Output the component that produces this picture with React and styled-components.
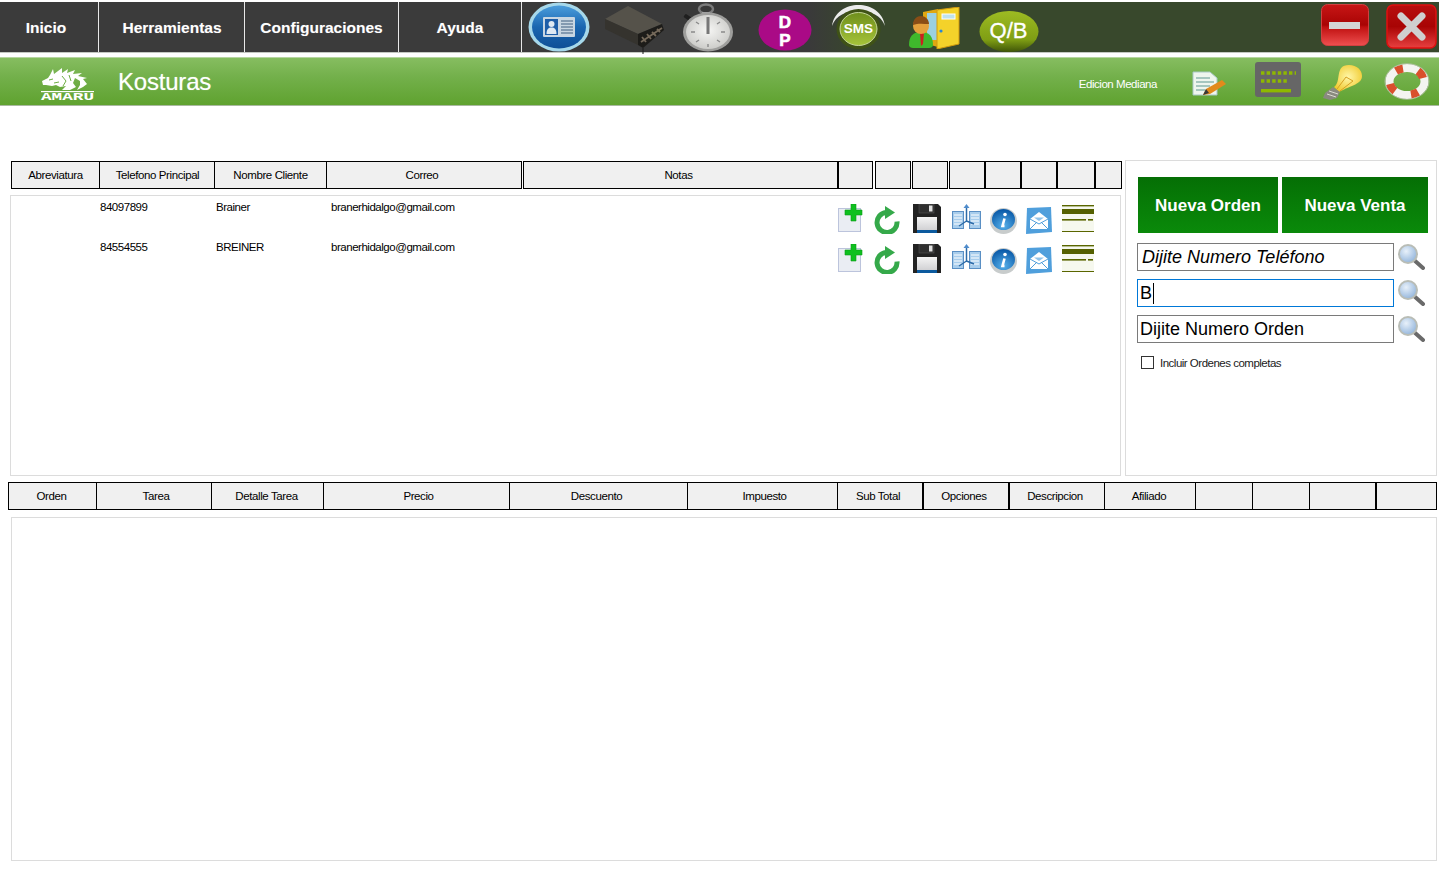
// App.jsx
import React from "react"
import styled, {createGlobalStyle} from "styled-components"

const GlobalStyle = createGlobalStyle`
    html, body {
        margin: 0;
        padding: 0;
        background: #ffffff;
        overflow: hidden;
    }
    body {
        font-family: "Liberation Sans", Arial, sans-serif;
        color: #000000;
    }
`

const Page = styled.div`
    width: 1439px;
    height: 894px;
    display: flex;
    flex-direction: column;
    padding-top: 2px;
    box-sizing: border-box;
`

// Верхня темна панель
const TopBar = styled.div`
    height: 50px;
    display: flex;
    align-items: stretch;
    background: #3a3a3a;
    border-bottom: 1px solid #c4c8c2;
`

const MenuButton = styled.div`
    width: ${({$w}) => $w}px;
    background: #3b3b3b;
    color: #ffffff;
    font-size: 15.5px;
    font-weight: 700;
    display: flex;
    align-items: center;
    justify-content: center;
    padding-top: 1px;
    padding-right: ${({$shift}) => $shift || 0}px;
    box-sizing: border-box;
    text-shadow: 0 0 1px rgba(255, 255, 255, 0.3);
`

const MenuSeparator = styled.div`
    width: 1px;
    margin-right: 1px;
    background: #e8e8e8;
`

const ToolIcons = styled.div`
    display: flex;
    align-items: flex-start;
    flex-grow: 1;
    background: linear-gradient(90deg, #3a3a3a 0%, #3a3a3a 36%, #38482c 42%, #38482c 100%);
`

const ToolSlot = styled.div`
    margin-left: ${({$left}) => $left}px;
    margin-top: ${({$top}) => $top}px;
    display: flex;
    line-height: 0;
`

const WindowButtons = styled.div`
    display: flex;
    align-items: flex-start;
    gap: 17px;
    padding: 2px 2px 0 0;
    background: #38482c;
`

// Зелена панель із заголовком
const TitleBar = styled.div`
    height: 49px;
    margin-top: 4px;
    display: flex;
    align-items: flex-start;
    background: linear-gradient(180deg, #86bd60 0%, #73b04b 40%, #5fa22f 100%);
    border-top: 1px solid #b7d6a1;
    border-bottom: 1px solid #a9b9a0;
    box-sizing: border-box;
`

const LogoBox = styled.div`
    margin: 8px 0 0 40px;
    width: 56px;
    height: 38px;
    line-height: 0;
`

const Title = styled.div`
    margin: 10px 0 0 22px;
    color: #ffffff;
    font-size: 24px;
    line-height: 28px;
    letter-spacing: -0.2px;
    text-shadow: 0 0 1px rgba(255, 255, 255, 0.5);
`

const Edition = styled.div`
    margin: 19px 35px 0 auto;
    color: #ffffff;
    font-size: 11.5px;
    line-height: 14px;
    letter-spacing: -0.45px;
`

const TitleIcons = styled.div`
    display: flex;
    align-items: flex-start;
    margin-right: 8px;
    line-height: 0;
`

const TitleSlot = styled.div`
    margin-left: ${({$left}) => $left}px;
    margin-top: ${({$top}) => $top}px;
    line-height: 0;
`

// Верхня частина: таблиця клієнтів і панель пошуку
const UpperArea = styled.div`
    margin-top: 54px;
    padding-left: 10px;
    display: flex;
    gap: 4px;
`

const LeftColumn = styled.div`
    width: 1111px;
    display: flex;
    flex-direction: column;
`

const HeaderRow = styled.div`
    display: flex;
    height: 28px;
    margin-left: ${({$left}) => $left}px;
    margin-top: ${({$top}) => $top}px;
`

const HeaderCell = styled.div`
    width: ${({$w}) => $w}px;
    margin-left: ${({$gap}) => $gap}px;
    flex-shrink: 0;
    box-sizing: border-box;
    border: 1px solid #000000;
    background: #f0f0f0;
    font-size: 11.5px;
    letter-spacing: -0.4px;
    display: flex;
    align-items: center;
    justify-content: center;
    padding-left: ${({$shift}) => ($shift > 0 ? $shift : 0)}px;
    padding-right: ${({$shift}) => ($shift < 0 ? -$shift : 0)}px;
`

const Panel = styled.div`
    box-sizing: border-box;
    border: 1px solid #dcdcdc;
    background: #ffffff;
`

const ClientList = styled(Panel)`
    height: 281px;
    margin-top: 6px;
`

const ClientRow = styled.div`
    height: 40px;
    display: flex;
    font-size: 11.5px;
    letter-spacing: -0.47px;
`

const ClientCell = styled.div`
    width: ${({$w}) => $w}px;
    flex-shrink: 0;
    padding-top: 4px;
    line-height: 14px;
`

const RowIcons = styled.div`
    display: flex;
    margin-left: ${({$left}) => $left}px;
    padding-top: 8px;
    line-height: 0;
`

const RowIconSlot = styled.div`
    width: ${({$w}) => $w}px;
    padding-top: ${({$top}) => $top}px;
    flex-shrink: 0;
`

const SearchPanel = styled(Panel)`
    width: 312px;
    height: 316px;
    padding: 16px 0 0 11px;
`

const ActionRow = styled.div`
    display: flex;
    gap: 4px;
    margin-left: 1px;
`

const ActionButton = styled.div`
    width: ${({$w}) => $w}px;
    height: 56px;
    box-sizing: border-box;
    padding-top: 2px;
    background: linear-gradient(180deg, #056f05 0%, #0a8a0a 100%);
    color: #ffffff;
    font-size: 17px;
    font-weight: 700;
    display: flex;
    align-items: center;
    justify-content: center;
`

const SearchRows = styled.div`
    margin-top: 10px;
    display: flex;
    flex-direction: column;
    gap: 8px;
`

const SearchRow = styled.div`
    display: flex;
    align-items: center;
    gap: 3px;
`

const SearchField = styled.div`
    width: 257px;
    height: 28px;
    box-sizing: border-box;
    border: 1px solid ${({$active}) => ($active ? "#0078d7" : "#7a7a7a")};
    padding: 1px 0 0 ${({$italic}) => ($italic ? 4 : 2)}px;
    font-size: 18px;
    font-style: ${({$italic}) => ($italic ? "italic" : "normal")};
    display: flex;
    align-items: center;
    white-space: nowrap;
`

const Caret = styled.span`
    width: 1px;
    height: 21px;
    background: #000000;
    margin-left: 1px;
`

const CheckRow = styled.label`
    display: flex;
    align-items: center;
    margin: 13px 0 0 4px;
    font-size: 11.5px;
    letter-spacing: -0.5px;
    color: #1a1a1a;
`

const CheckBox = styled.span`
    width: 13px;
    height: 13px;
    box-sizing: border-box;
    border: 1px solid #333333;
    background: #ffffff;
    margin-right: 6px;
`

const OrderList = styled(Panel)`
    margin: 7px 0 0 11px;
    width: 1426px;
    height: 344px;
`

// Піктограми панелі інструментів
const IdCardIcon = () => (
  <svg width="62" height="50" viewBox="0 0 62 50">
    <defs>
      <linearGradient id="idBlue" x1="0" y1="0" x2="0" y2="1">
        <stop offset="0" stopColor="#4b9ddc" />
        <stop offset="0.5" stopColor="#1a66b0" />
        <stop offset="1" stopColor="#0f4f96" />
      </linearGradient>
    </defs>
    <ellipse cx="31" cy="25" rx="30.5" ry="24.5" fill="#a6d8ea" />
    <ellipse cx="31" cy="25" rx="27" ry="21.5" fill="url(#idBlue)" />
    <rect x="15" y="15" width="32" height="20" rx="1" fill="#c8d6e2" />
    <rect x="17" y="17" width="13" height="16" fill="#1e5ea8" />
    <circle cx="23.5" cy="22" r="3" fill="#dfe9f2" />
    <path d="M18.5 32c0-5 2-6.5 5-6.5s5 1.5 5 6.5z" fill="#dfe9f2" />
    <path d="M33 19h12M33 22h12M33 25h12M33 28h12M33 31h12" stroke="#3f5f80" strokeWidth="1.2" />
  </svg>
)

const DrawerIcon = () => (
  <svg width="62" height="52" viewBox="0 0 62 52">
    <path d="M1 17 L24 4 L58 22 L34 32z" fill="#55524a" />
    <path d="M1 17 L34 32 L34 43 L1 27z" fill="#35332e" />
    <path d="M34 32 L58 22 L60 28 L39 46 L34 43z" fill="#1d1c19" />
    <path d="M38 35 L42 40 M43 32 L47 37 M48 30 L52 34 M53 27 L56 30 M37 40 L58 26" stroke="#75695a" strokeWidth="1.8" />
    <path d="M39 46 L39 52" stroke="#1a1a1a" strokeWidth="1" />
  </svg>
)

const StopwatchIcon = () => (
  <svg width="54" height="50" viewBox="0 0 54 50">
    <defs>
      <radialGradient id="watchFace" cx="0.5" cy="0.45" r="0.6">
        <stop offset="0" stopColor="#f6f6f4" />
        <stop offset="1" stopColor="#c9c9c6" />
      </radialGradient>
    </defs>
    <ellipse cx="24" cy="7" rx="7" ry="4.5" fill="none" stroke="#7c7c7c" strokeWidth="2.5" />
    <rect x="20" y="10" width="8" height="5" fill="#a4a4a4" />
    <rect x="2" y="13" width="7" height="4" rx="1" transform="rotate(35 5 15)" fill="#1f1f1f" />
    <ellipse cx="26" cy="30" rx="25" ry="19.5" fill="#9e9e9c" />
    <ellipse cx="26" cy="30" rx="22" ry="17" fill="url(#watchFace)" />
    <path d="M9 30h4M39 30h4M14 20l3 2M38 20l-3 2M14 40l3-2M38 40l-3-2M26 15v3M26 42v3" stroke="#8a8a8a" strokeWidth="1.4" />
    <rect x="24.5" y="15" width="3" height="17" fill="#777777" />
  </svg>
)

const DpIcon = () => (
  <svg width="54" height="42" viewBox="0 0 54 42">
    <ellipse cx="27" cy="21" rx="26.5" ry="20.5" fill="#aa0a86" />
    <text x="27" y="18.5" textAnchor="middle" fontFamily="Liberation Sans" fontWeight="700" fontSize="17" fill="#ffffff" stroke="#ffffff" strokeWidth="0.6">D</text>
    <text x="27" y="37" textAnchor="middle" fontFamily="Liberation Sans" fontWeight="700" fontSize="17" fill="#ffffff" stroke="#ffffff" strokeWidth="0.6">P</text>
  </svg>
)

const SmsIcon = () => (
  <svg width="55" height="46" viewBox="0 0 55 46">
    <defs>
      <linearGradient id="smsGreen" x1="0" y1="0" x2="0" y2="1">
        <stop offset="0" stopColor="#6f8f1c" />
        <stop offset="1" stopColor="#a6c43a" />
      </linearGradient>
    </defs>
    <path d="M1 22C3 8 15 1 27.5 1S52 8 54 22C50 11 40 7 27.5 7S5 11 1 22z" fill="#ececec" />
    <ellipse cx="27.5" cy="25" rx="22" ry="20" fill="#3f5216" />
    <ellipse cx="27.5" cy="25" rx="18.5" ry="16.5" fill="url(#smsGreen)" stroke="#c6d79a" strokeWidth="1" />
    <text x="27.5" y="28.5" textAnchor="middle" fontFamily="Liberation Sans" fontWeight="700" fontSize="13.5" fill="#ffffff">SMS</text>
  </svg>
)

const DoorUserIcon = () => (
  <svg width="52" height="42" viewBox="0 0 52 42">
    <path d="M15 5 L30 2 V40 L15 36z" fill="#e0a712" />
    <rect x="19" y="6" width="10" height="27" fill="#9bd0e2" />
    <path d="M29 3 L51 0 V37 L29 42z" fill="#f4d22a" stroke="#d19a0e" strokeWidth="1" />
    <rect x="34" y="7" width="13" height="5" fill="#bfe2ee" stroke="#ffffff" strokeWidth="1" />
    <circle cx="33" cy="24" r="1.6" fill="#2b86d6" />
    <path d="M1 38c0-9 4-13 12-13s12 4 12 13c0 2-2 3-4 3H5c-2 0-4-1-4-3z" fill="#3fb92c" />
    <path d="M12 26l4 0-1 11-2 2z" fill="#cc2020" />
    <circle cx="13" cy="19" r="8" fill="#e4a03c" />
    <path d="M5 18c0-6 4-9 8-9s8 3 8 8c-5 0-11-1-16 1z" fill="#8a4d16" />
  </svg>
)

const QbIcon = () => (
  <svg width="60" height="41" viewBox="0 0 60 41">
    <defs>
      <linearGradient id="qbGreen" x1="0" y1="0" x2="0" y2="1">
        <stop offset="0" stopColor="#9dbb22" />
        <stop offset="0.7" stopColor="#7f9e14" />
        <stop offset="1" stopColor="#3f5508" />
      </linearGradient>
    </defs>
    <ellipse cx="30" cy="20.5" rx="29.5" ry="20.5" fill="url(#qbGreen)" />
    <text x="29.5" y="26.5" textAnchor="middle" fontFamily="Liberation Sans" fontSize="22" fill="#ffffff" stroke="#ffffff" strokeWidth="0.3">Q/B</text>
  </svg>
)

const MinimizeIcon = () => (
  <svg width="48" height="42" viewBox="0 0 48 42">
    <defs>
      <linearGradient id="redMin" x1="0" y1="0" x2="0" y2="1">
        <stop offset="0" stopColor="#c81616" />
        <stop offset="0.5" stopColor="#a80404" />
        <stop offset="0.55" stopColor="#c01010" />
        <stop offset="1" stopColor="#ee5050" />
      </linearGradient>
    </defs>
    <rect x="0.5" y="0.5" width="47" height="41" rx="6" fill="url(#redMin)" stroke="#d04040" />
    <rect x="8" y="18" width="31" height="7" fill="#d4d4d4" />
  </svg>
)

const CloseIcon = () => (
  <svg width="51" height="45" viewBox="0 0 51 45">
    <defs>
      <linearGradient id="redClose" x1="0" y1="0" x2="0" y2="1">
        <stop offset="0" stopColor="#b80f0f" />
        <stop offset="0.5" stopColor="#a80404" />
        <stop offset="1" stopColor="#e84040" />
      </linearGradient>
    </defs>
    <rect x="1" y="1" width="49" height="43" rx="6" fill="url(#redClose)" stroke="#e01010" strokeWidth="1.5" />
    <path d="M15 12 L36 33 M36 12 L15 33" stroke="#cfcfcf" strokeWidth="7" strokeLinecap="round" />
  </svg>
)

// Логотип: дракон і підпис
const DragonLogo = () => (
  <svg width="56" height="38" viewBox="0 0 56 38">
    <path
      fill="#ffffff"
      d="M2 15 L8 12 L10 9 L13 3 L14 8 L18 5 L22 2 L22 7 L28 3 L27 7 L35 4 L33 8 L42 7 L38 10 L47 12 L43 13 L47 18 L43 21 L37 24 L40 19 L40 15 L35 12 L33 17 L36 21 L30 24 L22 24 L26 20 L20 21 L16 19 L12 20 L6 19 L3 19 Z"
    />
    <path d="M9 14l4-1M22 10l4 5-3 5M29 9l2 6M14 17l5-1" stroke="#6fae45" strokeWidth="1" fill="none" />
    <rect x="1" y="25" width="53" height="1.2" fill="#ffffff" />
    <text x="1" y="34" textLength="53" lengthAdjust="spacingAndGlyphs" fontFamily="Liberation Mono" fontWeight="700" fontSize="10.5" fill="#ffffff">AMARU</text>
  </svg>
)

const EditNoteIcon = () => (
  <svg width="36" height="26" viewBox="0 0 36 26">
    <path d="M1 1h17l7 6v17H1z" fill="#eef5ee" stroke="#a9c7c7" strokeWidth="1" />
    <path d="M4 7h14M4 11h18M4 15h14M4 19h9" stroke="#8eb6b0" strokeWidth="1.6" />
    <path d="M11 24 L14 18 L30 9 L34 13 L18 23z" fill="#e28a1c" />
    <path d="M11 24 L14 18 L17 22z" fill="#383838" />
  </svg>
)

const KeyboardIcon = () => (
  <svg width="46" height="35" viewBox="0 0 46 35">
    <rect width="46" height="35" rx="3" fill="#666666" />
    <path d="M6 11h35M6 19h28" stroke="#8fb800" strokeWidth="3.6" strokeDasharray="3.4 2.2" />
    <rect x="6" y="27" width="30" height="3.4" fill="#8fb800" />
  </svg>
)

const BulbIcon = () => (
  <svg width="40" height="36" viewBox="0 0 40 36">
    <defs>
      <radialGradient id="bulbGlow" cx="0.5" cy="0.45" r="0.6">
        <stop offset="0" stopColor="#fff7a8" />
        <stop offset="1" stopColor="#f0c92c" />
      </radialGradient>
    </defs>
    <path d="M27 1C35 1 40 6 40 12C40 20 30 21 17 28L12 23C20 18 12 1 27 1z" fill="url(#bulbGlow)" />
    <path d="M15 25L24 13L31 17L18 27" stroke="#d6a125" strokeWidth="1" fill="none" />
    <path d="M11 23l7 5-3 6-7 2-7-2 2-5z" fill="#8a8a80" />
    <path d="M5 30l9 3M7 27l9 3" stroke="#dcdcd0" strokeWidth="1" />
  </svg>
)

const LifebuoyIcon = () => (
  <svg width="48" height="37" viewBox="0 0 48 37">
    <ellipse cx="24" cy="18.5" rx="17.5" ry="13.5" fill="none" stroke="#f4f4f0" strokeWidth="8" />
    <path
      d="M13 8 A17.5 13.5 0 0 1 20 5.5 M35 8 A17.5 13.5 0 0 1 40 15 M35 29 A17.5 13.5 0 0 1 28 31.5 M12 28 A17.5 13.5 0 0 1 7 21"
      fill="none"
      stroke="#d9502c"
      strokeWidth="8"
    />
    <ellipse cx="24" cy="18.5" rx="22" ry="17.8" fill="none" stroke="#b9c2ae" strokeWidth="0.8" />
  </svg>
)

// Піктограми рядка клієнта
const AddDocIcon = () => (
  <svg width="25" height="28" viewBox="0 0 25 28">
    <rect x="0.5" y="4.5" width="22" height="23" fill="#eaedf3" stroke="#bcc4dc" />
    <path d="M13 0h5v6h6v5h-6v6h-5v-6H7V6h6z" fill="#0fc01f" stroke="#0a9a18" strokeWidth="0.6" />
  </svg>
)

const RefreshIcon = () => (
  <svg width="27" height="28" viewBox="0 0 27 28">
    <path d="M23 15.5A10 10 0 1 1 12 6.5" fill="none" stroke="#35a94a" strokeWidth="5" />
    <path d="M11 0 L21 6.5 L11 13z" fill="#35a94a" />
  </svg>
)

const FloppyIcon = () => (
  <svg width="28" height="29" viewBox="0 0 28 29">
    <defs>
      <linearGradient id="floppyLabel" x1="0" y1="0" x2="0" y2="1">
        <stop offset="0" stopColor="#f4f4f4" />
        <stop offset="1" stopColor="#c9c9cc" />
      </linearGradient>
    </defs>
    <path d="M0 0h25l3 3v26H0z" fill="#222222" />
    <rect x="6" y="0" width="15" height="9" fill="#2f2f2f" stroke="#555555" strokeWidth="0.6" />
    <rect x="16" y="1.5" width="3.5" height="6" fill="#e0e0e0" />
    <rect x="4" y="13" width="20" height="16" fill="url(#floppyLabel)" />
    <rect x="4" y="26" width="20" height="3" fill="#0c5a9e" />
  </svg>
)

const ShareIcon = () => (
  <svg width="29" height="26" viewBox="0 0 29 26">
    <rect x="0.5" y="7.5" width="11" height="17" fill="#a8cdec" stroke="#5a8fc4" />
    <rect x="17.5" y="7.5" width="11" height="17" fill="#a8cdec" stroke="#5a8fc4" />
    <path d="M2 11h8M2 14h8M2 17h8M2 20h8M19 11h8M19 14h8M19 17h8M19 20h8" stroke="#ffffff" strokeWidth="1" />
    <path d="M14.5 18V3M14.5 17L7 22M14.5 17L22 20" stroke="#2d6ba8" strokeWidth="1.5" fill="none" />
    <path d="M14.5 0l3 4h-6z" fill="#4f8ccc" />
  </svg>
)

const InfoIcon = () => (
  <svg width="27" height="26" viewBox="0 0 27 26">
    <defs>
      <radialGradient id="infoBlue" cx="0.5" cy="0.8" r="0.75">
        <stop offset="0" stopColor="#56b0ea" />
        <stop offset="1" stopColor="#0a5aa8" />
      </radialGradient>
    </defs>
    <ellipse cx="13.5" cy="13" rx="13.5" ry="13" fill="#c8cccc" />
    <ellipse cx="13.5" cy="11.5" rx="11.5" ry="10.5" fill="url(#infoBlue)" />
    <circle cx="15" cy="6.5" r="1.8" fill="#ffffff" />
    <path d="M14.5 10.5l-2 7.5h2" fill="none" stroke="#ffffff" strokeWidth="2.6" />
  </svg>
)

const MailIcon = () => (
  <svg width="27" height="27" viewBox="0 0 27 27">
    <path d="M2 1 L26 0 L27 25 L1 27z" fill="#4f9fdc" />
    <path d="M5 12 L14 5 L23 12 V22 H5z" fill="#ffffff" />
    <path d="M5 12 L14 17 L23 12 M5 22 L12 15 M23 22 L16 15" fill="none" stroke="#4f9fdc" strokeWidth="1" />
    <path d="M9 10.5h10l-5 3.5z" fill="#8fc3ea" />
  </svg>
)

const LinesIcon = () => (
  <svg width="32" height="27" viewBox="0 0 32 27">
    <rect width="32" height="27" fill="#f6f8ee" />
    <rect y="0" width="32" height="1.4" fill="#5a6600" />
    <rect y="4" width="32" height="5" fill="#556000" />
    <rect y="14" width="24" height="1.6" fill="#5a6600" />
    <rect y="14" x="26" width="5" height="1.6" fill="#5a6600" />
    <rect y="26" width="32" height="1.2" fill="#5a6600" />
  </svg>
)

const LensIcon = () => (
  <svg width="28" height="26" viewBox="0 0 28 26">
    <defs>
      <radialGradient id="lensGlass" cx="0.4" cy="0.35" r="0.7">
        <stop offset="0" stopColor="#e8f1fa" />
        <stop offset="1" stopColor="#8fb2da" />
      </radialGradient>
    </defs>
    <path d="M17 16 L26 24" stroke="#6a6a6a" strokeWidth="4" strokeLinecap="round" />
    <circle cx="11" cy="10" r="9" fill="url(#lensGlass)" stroke="#b9bdb6" strokeWidth="2" />
  </svg>
)

const menuItems = [
  {label: "Inicio", w: 98, shift: 6},
  {label: "Herramientas", w: 144},
  {label: "Configuraciones", w: 152, shift: 1},
  {label: "Ayuda", w: 121, shift: 1},
]

const toolIcons = [
  {Icon: IdCardIcon, left: 5, top: 0},
  {Icon: DrawerIcon, left: 14, top: 0},
  {Icon: StopwatchIcon, left: 16, top: 0},
  {Icon: DpIcon, left: 22, top: 7},
  {Icon: SmsIcon, left: 19, top: 2},
  {Icon: DoorUserIcon, left: 22, top: 5},
  {Icon: QbIcon, left: 19, top: 9},
]

const clientColumns = [
  {label: "Abreviatura", w: 89, gap: 0},
  {label: "Telefono Principal", w: 116, gap: -1, shift: 1},
  {label: "Nombre Cliente", w: 113, gap: -1},
  {label: "Correo", w: 196, gap: -1, shift: -4},
  {label: "Notas", w: 315, gap: 1, shift: -4},
  {w: 35, gap: 0},
  {w: 36, gap: 2},
  {w: 36, gap: 1},
  {w: 36, gap: 1},
  {w: 36, gap: 0},
  {w: 36, gap: 0},
  {w: 38, gap: 0},
  {w: 27, gap: 0},
]

const orderColumns = [
  {label: "Orden", w: 89, gap: 0, shift: -2},
  {label: "Tarea", w: 116, gap: -1, shift: 4},
  {label: "Detalle Tarea", w: 113, gap: -1, shift: -2},
  {label: "Precio", w: 187, gap: -1, shift: 4},
  {label: "Descuento", w: 179, gap: -1, shift: -4},
  {label: "Impuesto", w: 151, gap: -1, shift: 4},
  {label: "Sub Total", w: 86, gap: -1, shift: -4},
  {label: "Opciones", w: 86, gap: 0, shift: -4},
  {label: "Descripcion", w: 96, gap: 0, shift: -4},
  {label: "Afiliado", w: 92, gap: -1, shift: -2},
  {w: 58, gap: -1},
  {w: 58, gap: -1},
  {w: 67, gap: -1},
  {w: 61, gap: 0},
]

const clients = [
  {phone: "84097899", name: "Brainer", mail: "branerhidalgo@gmail.com"},
  {phone: "84554555", name: "BREINER", mail: "branerhidalgo@gmail.com"},
]

const rowIcons = [
  {Icon: AddDocIcon, w: 36, top: 0},
  {Icon: RefreshIcon, w: 39, top: 2},
  {Icon: FloppyIcon, w: 39, top: 0},
  {Icon: ShareIcon, w: 38, top: 0},
  {Icon: InfoIcon, w: 35, top: 4},
  {Icon: MailIcon, w: 37, top: 3},
  {Icon: LinesIcon, w: 32, top: 1},
]

const searchFields = [
  {text: "Dijite Numero Teléfono", italic: true},
  {text: "B", active: true},
  {text: "Dijite Numero Orden"},
]

function App() {
  return (
    <Page>
      <GlobalStyle />

      <TopBar>
        {menuItems.map((item) => (
          <React.Fragment key={item.label}>
            <MenuButton $w={item.w} $shift={item.shift}>{item.label}</MenuButton>
            <MenuSeparator />
          </React.Fragment>
        ))}
        <ToolIcons>
          {toolIcons.map(({Icon, left, top}, i) => (
            <ToolSlot key={i} $left={left} $top={top}>
              <Icon />
            </ToolSlot>
          ))}
        </ToolIcons>
        <WindowButtons>
          <MinimizeIcon />
          <CloseIcon />
        </WindowButtons>
      </TopBar>

      <TitleBar>
        <LogoBox>
          <DragonLogo />
        </LogoBox>
        <Title>Kosturas</Title>
        <Edition>Edicion Mediana</Edition>
        <TitleIcons>
          <TitleSlot $left={0} $top={13}><EditNoteIcon /></TitleSlot>
          <TitleSlot $left={27} $top={4}><KeyboardIcon /></TitleSlot>
          <TitleSlot $left={21} $top={6}><BulbIcon /></TitleSlot>
          <TitleSlot $left={21} $top={5}><LifebuoyIcon /></TitleSlot>
        </TitleIcons>
      </TitleBar>

      <UpperArea>
        <LeftColumn>
          <HeaderRow $left={1} $top={1}>
            {clientColumns.map((col, i) => (
              <HeaderCell key={i} $w={col.w} $gap={col.gap} $shift={col.shift || 0}>{col.label}</HeaderCell>
            ))}
          </HeaderRow>
          <ClientList>
            {clients.map((client) => (
              <ClientRow key={client.phone}>
                <ClientCell $w={89} />
                <ClientCell $w={116}>{client.phone}</ClientCell>
                <ClientCell $w={115}>{client.name}</ClientCell>
                <ClientCell $w={200}>{client.mail}</ClientCell>
                <RowIcons $left={307}>
                  {rowIcons.map(({Icon, w, top}, i) => (
                    <RowIconSlot key={i} $w={w} $top={top}>
                      <Icon />
                    </RowIconSlot>
                  ))}
                </RowIcons>
              </ClientRow>
            ))}
          </ClientList>
        </LeftColumn>

        <SearchPanel>
          <ActionRow>
            <ActionButton $w={140}>Nueva Orden</ActionButton>
            <ActionButton $w={146}>Nueva Venta</ActionButton>
          </ActionRow>
          <SearchRows>
            {searchFields.map((field) => (
              <SearchRow key={field.text}>
                <SearchField $italic={field.italic} $active={field.active}>
                  {field.text}
                  {field.active && <Caret />}
                </SearchField>
                <LensIcon />
              </SearchRow>
            ))}
          </SearchRows>
          <CheckRow>
            <CheckBox />
            Incluir Ordenes completas
          </CheckRow>
        </SearchPanel>
      </UpperArea>

      <HeaderRow $left={8} $top={6}>
        {orderColumns.map((col, i) => (
          <HeaderCell key={i} $w={col.w} $gap={col.gap} $shift={col.shift || 0}>{col.label}</HeaderCell>
        ))}
      </HeaderRow>

      <OrderList />
    </Page>
  )
}

export default App
